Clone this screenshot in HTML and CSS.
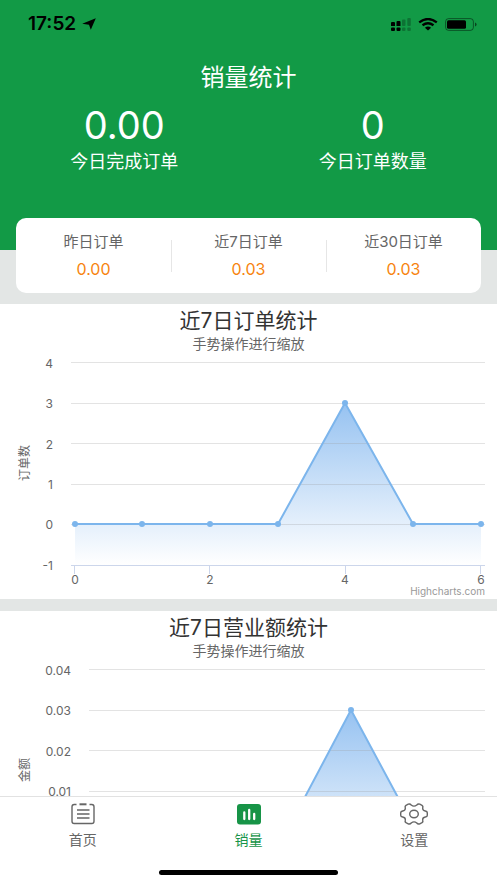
FILE: index.html
```html
<!DOCTYPE html>
<html lang="zh-CN">
<head>
<meta charset="utf-8">
<meta name="viewport" content="width=device-width, initial-scale=1">
<title>销量统计</title>
<link rel="stylesheet" href="styles.css">
</head>
<body>
<main class="content">
  <header class="hero">
    <div class="status">
      <div class="status-group">
        <span class="time">17:52</span>
        <svg class="arrow" viewBox="0 0 14 12"><path d="M13.800.2 8.800 11.800 7 6.800.2 5.700z"/></svg>
      </div>
      <div class="status-group status-icons">
        <svg width="20" height="13" viewBox="0 0 20 13">
          <path d="M0 5q0-1 1-1h2q1 0 1 1v3H0zM5.500 4q0-1 1-1h2q1 0 1 1v4h-4z"/>
          <rect y="9.500" width="4" height="3.500" rx="1"/><rect x="5.500" y="9.500" width="4" height="3.500" rx="1"/>
          <g opacity=".25"><rect x="11" y="1.500" width="3.500" height="6.500" rx="1"/><rect x="16.300" width="3.500" height="8" rx="1"/><rect x="11" y="9.500" width="3.500" height="3.500" rx="1"/><rect x="16.300" y="9.500" width="3.500" height="3.500" rx="1"/></g>
        </svg>
        <svg width="20" height="13" viewBox="0 0 20 13">
          <path d="M1.200 4.300Q10-2.300 18.800 4.300M4.500 7.300Q10 3.300 15.500 7.300" fill="none" stroke="#000" stroke-width="2.300"/>
          <path d="M6.900 9.700Q10 7.500 13.100 9.700L10 12.400z"/>
        </svg>
        <svg width="32" height="13" viewBox="0 0 32 13">
          <rect x=".6" y=".6" width="27.800" height="11.800" rx="3" fill="none" stroke="#000" stroke-opacity=".45"/>
          <rect x="2" y="2.200" width="19" height="8.600" rx="1.500"/>
          <path d="M30 4.500q1.600.5 1.600 2t-1.600 2z" opacity=".55"/>
        </svg>
      </div>
    </div>
    <h1>销量统计</h1>
    <div class="totals">
      <div class="total"><strong>0.00</strong><span>今日完成订单</span></div>
      <div class="total"><strong>0</strong><span>今日订单数量</span></div>
    </div>
  </header>

  <section class="summary">
    <div class="stat"><span>昨日订单</span><b>0.00</b></div>
    <div class="stat"><span>近7日订单</span><b>0.03</b></div>
    <div class="stat"><span>近30日订单</span><b>0.03</b></div>
  </section>

  <section class="panel">
    <h2>近7日订单统计</h2>
    <p>手势操作进行缩放</p>
    <svg class="chart" viewBox="0 0 497 245" role="img" aria-label="近7日订单统计">
      <defs><linearGradient id="fill1" gradientUnits="userSpaceOnUse" x1="0" y1="49" x2="0" y2="211"><stop offset="0" stop-color="#96c2f1"/><stop offset="1" stop-color="#fff"/></linearGradient></defs>
      <path fill="url(#fill1)" d="M75 170H278L345 49 413 170H481V211H75z"/>
      <path class="grid" d="M71 8.500H485M71 49.500H485M71 89.500H485M71 130.500H485M71 170.500H485"/>
      <path class="axis" d="M71 211.500H485M74.500 211V220M209.500 211V220M345.500 211V220M480.500 211V220"/>
      <path class="line" d="M75 170H278L345 49 413 170H481"/>
      <g class="dots"><circle cx="75" cy="170" r="3"/><circle cx="142" cy="170" r="3"/><circle cx="210" cy="170" r="3"/><circle cx="278" cy="170" r="3"/><circle cx="345" cy="49" r="3"/><circle cx="413" cy="170" r="3"/><circle cx="481" cy="170" r="3"/></g>
      <g class="labels end"><text x="53" y="14">4</text><text x="53" y="54">3</text><text x="53" y="95">2</text><text x="53" y="135">1</text><text x="53" y="175">0</text><text x="53" y="216">-1</text></g>
      <g class="labels middle"><text x="75" y="230">0</text><text x="210" y="230">2</text><text x="345" y="230">4</text><text x="481" y="230">6</text></g>
      <text class="axis-title" transform="translate(29 109) rotate(-90)">订单数</text>
      <text class="credits" x="485" y="241">Highcharts.com</text>
    </svg>
  </section>

  <section class="panel">
    <h2>近7日营业额统计</h2>
    <p>手势操作进行缩放</p>
    <svg class="chart" viewBox="0 0 497 245" role="img" aria-label="近7日营业额统计">
      <defs><linearGradient id="fill2" gradientUnits="userSpaceOnUse" x1="0" y1="49" x2="0" y2="211"><stop offset="0" stop-color="#96c2f1"/><stop offset="1" stop-color="#fff"/></linearGradient></defs>
      <path fill="url(#fill2)" d="M93 170H287L351 49 416 170H481V211H93z"/>
      <path class="grid" d="M89 8.500H485M89 49.500H485M89 89.500H485M89 130.500H485M89 170.500H485"/>
      <path class="axis" d="M89 211.500H485M93.500 211V220M222.500 211V220M351.500 211V220M480.500 211V220"/>
      <path class="line" d="M93 170H287L351 49 416 170H481"/>
      <g class="dots"><circle cx="93" cy="170" r="3"/><circle cx="158" cy="170" r="3"/><circle cx="222" cy="170" r="3"/><circle cx="287" cy="170" r="3"/><circle cx="351" cy="49" r="3"/><circle cx="416" cy="170" r="3"/><circle cx="481" cy="170" r="3"/></g>
      <g class="labels end"><text x="71" y="14">0.04</text><text x="71" y="54">0.03</text><text x="71" y="95">0.02</text><text x="71" y="135">0.01</text></g>
      <text class="axis-title" transform="translate(29 109) rotate(-90)">金额</text>
    </svg>
  </section>
</main>

<nav class="tabs">
  <a class="tab" href="#home">
    <svg width="24" height="22" viewBox="0 0 24 22" fill="none" stroke="#666" stroke-width="1.400">
      <path d="M5.500 1.500H3.200Q1 1.500 1 3.700V18.300Q1 20.500 3.200 20.500H20.800Q23 20.500 23 18.300V3.700Q23 1.500 20.800 1.500H18.500"/><path d="M8.500 1.300H15.500" stroke-width="2"/><path d="M6 7H18.500M6 11H18.500M6 15H18.500"/>
    </svg>
    <span>首页</span>
  </a>
  <a class="tab active" href="#sales" aria-current="page">
    <svg width="24" height="22" viewBox="0 0 24 22">
      <rect y="1" width="24" height="20.500" rx="3" fill="#179447"/><path d="M7.300 9.500V16M12.200 7V16M17.200 11V16" stroke="#fff" stroke-width="2.300" stroke-linecap="round"/>
    </svg>
    <span>销量</span>
  </a>
  <a class="tab" href="#settings">
    <svg width="28" height="22" viewBox="0 0 28 22" fill="none" stroke="#666" stroke-width="1.400" stroke-linejoin="round">
      <path d="M8.200 1.200Q10 .4 11.200 2 14 4.200 16.800 2 18 .4 19.800 1.200L22 2.300Q23.300 3.200 22.700 4.800 22.400 7.500 25.300 8 27.300 8.300 27.300 9.800V12.200Q27.300 13.700 25.300 14 22.400 14.500 22.700 17.200 23.300 18.800 22 19.700L19.800 20.800Q18 21.600 16.800 20 14 17.800 11.200 20 10 21.600 8.200 20.800L6 19.700Q4.700 18.800 5.300 17.200 5.600 14.500 2.700 14 .7 13.700.7 12.200V9.800Q.7 8.300 2.700 8 5.600 7.500 5.300 4.800 4.700 3.200 6 2.300z"/><ellipse cx="14" cy="11" rx="4.300" ry="3.700"/>
    </svg>
    <span>设置</span>
  </a>
  <div class="home-bar"></div>
</nav>
</body>
</html>
```

FILE: styles.css
```css
* { box-sizing: border-box; }

body {
  margin: 0;
  height: 100vh;
  display: flex;
  flex-direction: column;
  background: #e3e6e5;
  color: #666;
  font-family: Inter, "Noto Sans CJK SC", sans-serif;
}

h1, h2, p { margin: 0; font-weight: 400; }

svg { display: block; }

.content {
  flex: 1;
  min-height: 0;
  overflow-y: auto;
  scrollbar-width: none;
}

.hero {
  padding: 12px 0 76px;
  background: #129a46;
  color: #fff;
}

.status {
  display: flex;
  justify-content: space-between;
  align-items: center;
  height: 24px;
  padding: 0 20px 0 28px;
  color: #000;
}

.status-group { display: flex; align-items: center; gap: 6px; }
.status-icons { gap: 7px; }
.time { font-size: 19px; font-weight: 600; line-height: 24px; }
.arrow { width: 14px; height: 12px; }

h1 {
  margin-top: 24px;
  font-size: 24px;
  line-height: 36px;
  text-align: center;
}

.totals { display: flex; margin-top: 4px; }

.total {
  flex: 1;
  display: flex;
  flex-direction: column;
  align-items: center;
}

.total strong { font-size: 38px; font-weight: 400; line-height: 50px; }
.total span { font-size: 18px; line-height: 24px; }

.summary {
  display: flex;
  margin: -32px 16px 11px;
  padding: 12px 0;
  border-radius: 10px;
  background: #fff;
}

.stat {
  flex: 1;
  display: flex;
  flex-direction: column;
  align-items: center;
  gap: 3px;
  font-size: 15px;
  line-height: 24px;
}

.stat + .stat {
  background: linear-gradient(#e6e6e6, #e6e6e6) left center / 1px 32px no-repeat;
}

.stat b { font-size: 16px; font-weight: 400; color: #f7840f; }

.panel {
  padding-top: 4px;
  margin-bottom: 12px;
  background: #fff;
  text-align: center;
}

.panel h2 { font-size: 21px; line-height: 26px; color: #333; }
.panel p { font-size: 14px; line-height: 20px; }

.chart { width: 100%; height: auto; }
.grid { fill: none; stroke: #999; stroke-opacity: 0.28; }
.axis { fill: none; stroke: #ccd6eb; }
.line { fill: none; stroke: #7cb5ec; stroke-width: 2; stroke-linejoin: round; }
.dots { fill: #7cb5ec; }
.labels { font-size: 12px; fill: #666; }
.end { text-anchor: end; }
.middle { text-anchor: middle; }
.axis-title { font-size: 12px; fill: #666; text-anchor: middle; }
.credits { font-size: 10px; fill: #999; text-anchor: end; }

.tabs {
  display: flex;
  flex-wrap: wrap;
  padding: 6px 0;
  border-top: 1px solid #e2e2e2;
  background: #fff;
}

.tab {
  flex: 1;
  display: flex;
  flex-direction: column;
  align-items: center;
  gap: 5px;
  font-size: 14px;
  line-height: 20px;
  color: #666;
  text-decoration: none;
}

.active { color: #179447; }

.home-bar {
  flex: none;
  width: 36%;
  height: 5px;
  margin: 20px 32% 2px;
  border-radius: 3px;
  background: #000;
}
```
